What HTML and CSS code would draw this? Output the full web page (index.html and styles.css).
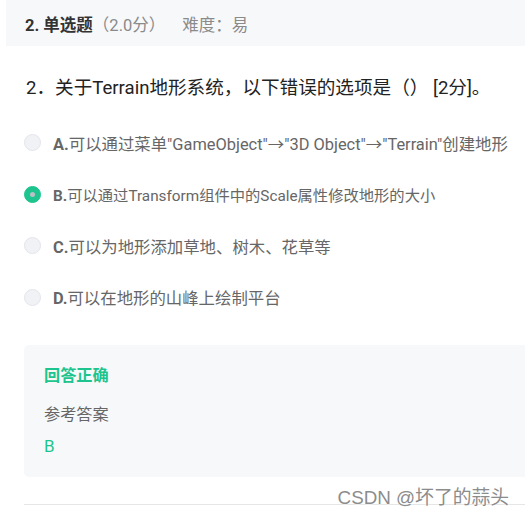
FILE: index.html
```html
<!DOCTYPE html>
<html lang="zh">
<head>
<meta charset="utf-8">
<link rel="stylesheet" href="styles.css">
</head>
<body>
<div class="page">
  <div class="head">
    <span class="qno">2. 单选题</span>
    <span class="score">（2.0分）</span>
    <span class="diff">难度：易</span>
  </div>
  <div class="question">2．关于Terrain地形系统，以下错误的选项是（） [2分]。</div>
  <ul class="options">
    <li class="opt"><span class="radio"></span><span class="label"><b>A.</b>可以通过菜单"GameObject"→"3D Object"→"Terrain"创建地形</span></li>
    <li class="opt sel"><span class="radio on"></span><span class="label"><b>B.</b>可以通过Transform组件中的Scale属性修改地形的大小</span></li>
    <li class="opt"><span class="radio"></span><span class="label"><b>C.</b>可以为地形添加草地、树木、花草等</span></li>
    <li class="opt"><span class="radio"></span><span class="label"><b>D.</b>可以在地形的山峰上绘制平台</span></li>
  </ul>
  <div class="answer">
    <div class="result">回答正确</div>
    <div class="ref">参考答案</div>
    <div class="key">B</div>
  </div>
  <div class="rule"></div>
  <div class="mark">CSDN @坏了的蒜头</div>
</div>
</body>
</html>
```
FILE: styles.css
```css
* { box-sizing: border-box; }
html, body { margin: 0; padding: 0; background: #fff; }
body {
  font-family: Roboto, "Noto Sans CJK SC", sans-serif;
  color: #333;
  width: 525px;
  height: 514px;
  overflow: hidden;
}
.page { position: relative; padding-left: 6px; }
.head {
  height: 46px;
  background: #f7f8fa;
  display: flex;
  align-items: center;
  padding-left: 19px;
  font-size: 16.5px;
  padding-top: 1px;
}
.qno { font-weight: 700; color: #333; }
.score { color: #8a8a8a; margin-left: 0; }
.diff { color: #8a8a8a; margin-left: 17px; }
.question {
  margin: 30px 0 0 20px;
  font-size: 18.6px;
  line-height: 24px;
  color: #222;
  white-space: nowrap;
}
.options {
  list-style: none;
  margin: 17px 0 0 0;
  padding: 0 0 0 18px;
}
.opt {
  display: flex;
  align-items: center;
  height: 51.5px;
  font-size: 16.4px;
  color: #666;
  white-space: nowrap;
}
.opt.sel { font-size: 15.3px; }
.opt b { font-weight: 700; color: #666; }
.radio {
  width: 17px;
  height: 17px;
  border-radius: 50%;
  background: #f1f2f6;
  border: 1px solid #e3e5eb;
  margin-right: 12px;
  flex: none;
  display: flex;
  align-items: center;
  justify-content: center;
}
.radio.on { background: #1ec48e; border-color: #1ec48e; }
.radio.on::after {
  content: "";
  width: 5px;
  height: 5px;
  border-radius: 50%;
  background: #b9c0c6;
}
.answer {
  margin: 22px 0 0 18px;
  background: #f7f8fa;
  border-radius: 5px 0 0 5px;
  height: 132px;
  padding: 20px 0 0 20px;
}
.result { color: #1ec48e; font-weight: 700; font-size: 16.2px; line-height: 22px; }
.ref { color: #666; font-size: 16.2px; line-height: 22px; margin-top: 17px; }
.key { color: #1ec48e; font-size: 17px; line-height: 22px; margin-top: 9px; }
.rule { margin: 27px 0 0 18px; height: 1px; background: #e6e6e6; }
.mark {
  position: absolute;
  right: 16px;
  top: 482px;
  font-family: "Liberation Sans", "Noto Sans CJK SC", sans-serif;
  font-size: 18.8px;
  color: #8c8c8c;
  text-shadow: 0 0 2px #fff, 0 0 1px #fff;
}
```
